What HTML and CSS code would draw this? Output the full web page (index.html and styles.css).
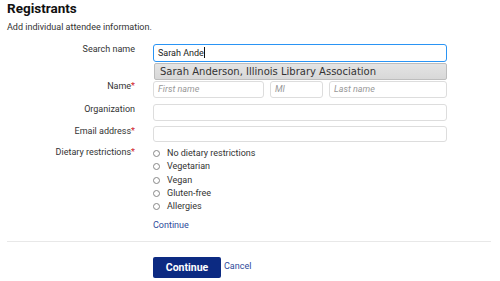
FILE: index.html
```html
<!DOCTYPE html>
<html>
<head>
<meta charset="utf-8">
<link rel="stylesheet" href="styles.css">
</head>
<body>
<div class="page">
  <h1 class="title">Registrants</h1>
  <p class="subtitle">Add individual attendee information.</p>

  <div class="form">
    <div class="row row-search">
      <div class="label">Search name</div>
      <div class="field">
        <div class="input input-focus">Sarah Ande<span class="caret"></span></div>
        <div class="suggest">Sarah Anderson, Illinois Library Association</div>
      </div>
    </div>

    <div class="row row-name">
      <div class="label">Name<span class="req">*</span></div>
      <div class="field name-fields">
        <div class="input ph first">First name</div>
        <div class="input ph mi">MI</div>
        <div class="input ph last">Last name</div>
      </div>
    </div>

    <div class="row row-org">
      <div class="label">Organization</div>
      <div class="field"><div class="input"></div></div>
    </div>

    <div class="row row-email">
      <div class="label">Email address<span class="req">*</span></div>
      <div class="field"><div class="input"></div></div>
    </div>

    <div class="row row-diet">
      <div class="label">Dietary restrictions<span class="req">*</span></div>
      <div class="field radios">
        <div class="radio"><span class="dot"></span>No dietary restrictions</div>
        <div class="radio"><span class="dot"></span>Vegetarian</div>
        <div class="radio"><span class="dot"></span>Vegan</div>
        <div class="radio"><span class="dot"></span>Gluten-free</div>
        <div class="radio"><span class="dot"></span>Allergies</div>
        <a class="link continue-link">Continue</a>
      </div>
    </div>
  </div>

  <hr class="divider">

  <div class="actions">
    <button class="btn">Continue</button>
    <a class="link cancel">Cancel</a>
  </div>
</div>
</body>
</html>
```

FILE: styles.css
```css
* { box-sizing: border-box; }
html, body { margin: 0; padding: 0; background: #fff; }
body {
  font-family: Roboto, "Liberation Sans", sans-serif;
  font-size: 9px;
  color: #333;
}
.page { padding: 0 9px 0 7px; }
.title {
  margin: 0;
  padding-top: 0;
  font-size: 13.5px;
  line-height: 17px;
  font-weight: 700;
  color: #111;
}
.subtitle {
  margin: 4px 0 0;
  line-height: 12px;
  font-size: 9px;
  color: #333;
}
.form { margin-top: 11px; }
.row {
  display: grid;
  grid-template-columns: 128px 294px;
  column-gap: 18px;
}
.label {
  text-align: right;
  line-height: 11px;
  padding-top: 0;
  color: #333;
}
.req { color: #d0202a; }
.field { position: relative; }
.input {
  height: 17px;
  border: 1px solid #ddd;
  border-radius: 3px;
  background: #fff;
  padding: 0 4px;
  line-height: 15px;
  font-size: 9px;
  color: #222;
}
.input-focus {
  height: 18px;
  border-color: #2a94f4;
  line-height: 16px;
}
.caret {
  display: inline-block;
  width: 1px;
  height: 11px;
  background: #111;
  vertical-align: -2px;
}
.suggest {
  position: absolute;
  left: 1px;
  right: 0;
  top: 19px;
  height: 17px;
  border: 1px solid #bdbdbd;
  border-radius: 2px;
  background: linear-gradient(#e4e4e4, #d8d8d8);
  font-family: "DejaVu Sans", Verdana, sans-serif;
  font-size: 10px;
  line-height: 15px;
  padding-left: 5px;
  color: #333;
  z-index: 2;
}
.row-name { margin-top: 19px; }
.name-fields { display: flex; gap: 6px; }
.ph { font-style: italic; color: #999; }
.first { width: 111px; }
.mi { width: 53px; }
.last { flex: 1; }
.row-org { margin-top: 6px; }
.row-email { margin-top: 5px; }
.row-email .input { height: 16px; }
.row-diet { margin-top: 5px; }
.radio {
  height: 13.3px;
  line-height: 13px;
  display: flex;
  align-items: center;
  color: #333;
}
.dot {
  width: 7px;
  height: 7px;
  border: 1px solid #888;
  border-radius: 50%;
  margin: 0 7px 0 0;
}
.link { color: #2d4a9a; text-decoration: none; }
.continue-link { display: block; margin-top: 7px; line-height: 11px; }
.divider {
  border: 0;
  border-top: 1px solid #e8e8e8;
  margin: 10px 0 0;
}
.actions {
  display: flex;
  align-items: center;
  gap: 3px;
  margin-top: 15px;
  padding-left: 146px;
}
.btn {
  width: 68px;
  height: 21px;
  background: #0c2a82;
  color: #fff;
  border: 0;
  border-radius: 2px;
  font-family: Roboto, "Liberation Sans", sans-serif;
  font-size: 10.5px;
  font-weight: 700;
  padding: 0;
}
.cancel { font-size: 9px; margin-top: -3px; }
```
